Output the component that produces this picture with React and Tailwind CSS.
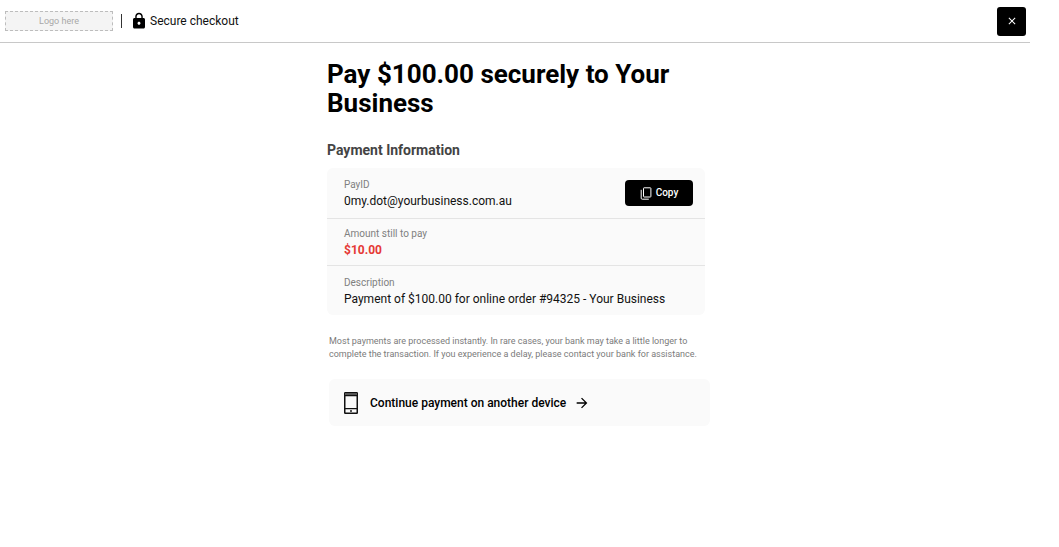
import React, { useState } from 'react'
import { MdLock, MdClose, MdArrowForward } from 'react-icons/md'

const payment = {
  payId: '0my.dot@yourbusiness.com.au',
  remaining: '$10.00',
  description: 'Payment of $100.00 for online order #94325 - Your Business'
}

const PhoneIcon = ({ className }) => (
  <svg viewBox="0 0 14 22" className={className} aria-hidden="true">
    <rect x="0.75" y="0.75" width="12.5" height="20.5" rx="0.5" fill="none" stroke="#111" strokeWidth="1.5" />
    <rect x="1" y="1" width="12" height="2.2" fill="#555" />
    <path d="M1 3.6h12M1 16.6h12" stroke="#111" strokeWidth="1.2" />
    <rect x="6" y="18" width="2" height="2" fill="#555" />
  </svg>
)

const CopyIcon = ({ className }) => (
  <svg viewBox="0 0 12 13" fill="none" stroke="currentColor" strokeWidth="1" className={className} aria-hidden="true">
    <rect x="3.5" y="0.8" width="7.4" height="9.2" rx="0.6" />
    <path d="M1.2 2.8v8.4a1 1 0 0 0 1 1h6.6" />
  </svg>
)

const Header = () => (
  <header className="flex items-center justify-between h-[43px] pl-[5px] pr-1 border-b border-[#c8c8c8]">
    <div className="flex items-center">
      <div className="flex items-center justify-center w-[108px] h-5 border border-dashed border-[#bdbdbd] bg-[#f4f4f4] text-[9px] leading-[16px] text-[#a8a8a8]">
        Logo here
      </div>
      <div className="w-px h-[14px] ml-2 bg-[#333]" />
      <MdLock className="w-[18px] h-[18px] ml-2 text-black" />
      <span className="ml-[2px] text-[12px] leading-[16px] text-[#111]">Secure checkout</span>
    </div>
    <button
      type="button"
      aria-label="Close"
      className="flex items-center justify-center w-[29px] h-[29px] rounded-[3px] bg-black text-white"
    >
      <MdClose className="w-3 h-3" />
    </button>
  </header>
)

const CopyButton = ({ value }) => {
  const [copied, setCopied] = useState(false)

  const handleCopy = async () => {
    try {
      await navigator.clipboard.writeText(value)
      setCopied(true)
    } catch (error) {
      console.error('Failed to copy PayID:', error)
    }
  }

  return (
    <button
      type="button"
      onClick={handleCopy}
      className="flex items-center justify-center gap-1 w-[68px] h-[26px] rounded-[4px] bg-black text-[10px] leading-[16px] font-medium text-white"
    >
      <CopyIcon className="w-3 h-[13px]" />
      {copied ? 'Copied' : 'Copy'}
    </button>
  )
}

const Label = ({ children }) => (
  <dt className="text-[10px] leading-[16px] text-[#808080]">{children}</dt>
)

const App = () => {
  return (
    <div className="pr-[29px] font-['Roboto',sans-serif]">
      <Header />

      <main className="max-w-[380px] mx-auto pl-[2px] pt-[17px]">
        <h1 className="text-[26px] leading-[29px] font-bold text-black">
          Pay $100.00 securely to Your Business
        </h1>
        <h2 className="mt-[23px] text-[14px] leading-[18px] font-bold text-[#444]">
          Payment Information
        </h2>

        {/* Payment details */}
        <dl className="mt-[9px] rounded-[6px] bg-[#fafafa] divide-y divide-[#e4e4e4]">
          <div className="flex items-center justify-between h-[51px] pl-[17px] pr-3">
            <div>
              <Label>PayID</Label>
              <dd className="text-[12px] leading-[16px] text-[#111]">{payment.payId}</dd>
            </div>
            <CopyButton value={payment.payId} />
          </div>
          <div className="flex flex-col justify-center h-[47px] pl-[17px]">
            <Label>Amount still to pay</Label>
            <dd className="text-[12px] leading-[16px] font-bold text-[#e53935]">{payment.remaining}</dd>
          </div>
          <div className="flex flex-col justify-center h-[49px] pl-[17px]">
            <Label>Description</Label>
            <dd className="text-[12px] leading-[16px] text-[#111]">{payment.description}</dd>
          </div>
        </dl>

        <div className="ml-[2px] -mr-[5px]">
          <p className="mt-5 pr-2 text-[9px] leading-[13px] text-[#7b7b7b]">
            Most payments are processed instantly. In rare cases, your bank may take a little longer to
            complete the transaction. If you experience a delay, please contact your bank for assistance.
          </p>

          <a href="#continue" className="flex items-center h-[47px] mt-[18px] pl-[15px] rounded-[6px] bg-[#fafafa] text-black">
            <PhoneIcon className="w-[14px] h-[22px]" />
            <span className="ml-3 text-[12px] leading-[16px] font-medium">Continue payment on another device</span>
            <MdArrowForward className="w-4 h-4 ml-2" />
          </a>
        </div>
      </main>
    </div>
  )
}

export default App
